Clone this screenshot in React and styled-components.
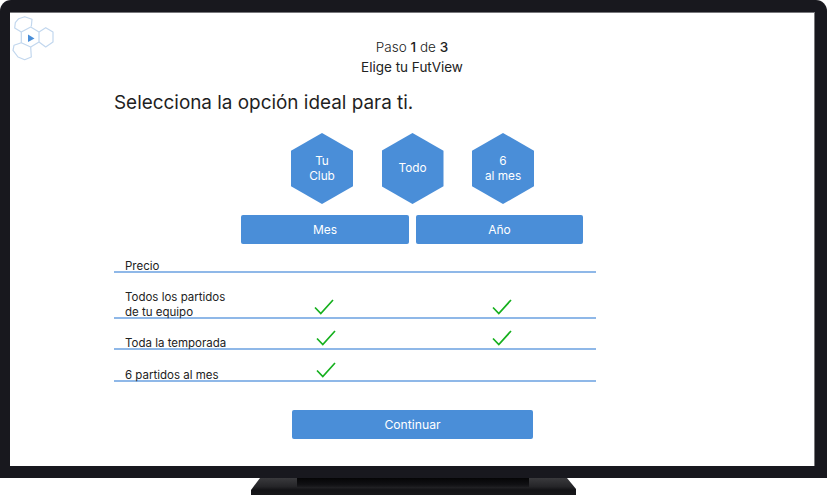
import React from 'react';
import styled, { createGlobalStyle } from 'styled-components';

const GlobalStyle = createGlobalStyle`
  html, body {
    margin: 0;
    padding: 0;
    background: #fff;
  }
  body {
    font-family: Inter, "Liberation Sans", sans-serif;
    overflow: hidden;
  }
`;

const Page = styled.div`
  width: 827px;
  height: 495px;
  display: flex;
  flex-direction: column;
  align-items: center;
`;

const Bezel = styled.div`
  width: 827px;
  height: 478px;
  box-sizing: border-box;
  padding: 12px 12px 12px 10px;
  background: #18181e;
  border-radius: 11px 11px 0 0;
`;

const Screen = styled.main`
  position: relative;
  height: 454px;
  box-sizing: border-box;
  padding: 24px 0 0 104px;
  background: #fff;
  border-top: 1px solid #77777b;
  border-right: 1px solid #77777b;
`;

const Logo = styled.svg`
  position: absolute;
  left: 0;
  top: 0;
`;

const Steps = styled.header`
  margin-left: -104px;
  text-align: center;
  font-size: 13.5px;
  line-height: 20px;
  color: #222;
`;

const StepCount = styled.div`
  font-weight: 300;
  b {
    font-weight: 500;
  }
`;

const Title = styled.h1`
  margin: 13px 0 0;
  font-size: 18.9px;
  line-height: 26px;
  font-weight: 400;
  color: #1f1f1f;
`;

const Options = styled.div`
  display: flex;
  gap: 28.5px;
  margin: 17px 0 0 177px;
`;

const Hexagon = styled.div`
  width: 62px;
  height: 71px;
  display: flex;
  align-items: center;
  justify-content: center;
  text-align: center;
  font-size: 11.8px;
  line-height: 15px;
  color: #fff;
  background: #4a8ed8;
  clip-path: polygon(50% 0, 100% 25%, 100% 75%, 50% 100%, 0 75%, 0 25%);
`;

const Plans = styled.div`
  display: flex;
  gap: 7px;
  margin: 11px 0 0 127px;
`;

const PlanButton = styled.button`
  width: ${props => props.$width}px;
  height: 29px;
  padding: 0;
  border: none;
  border-radius: 2px;
  font: inherit;
  font-size: 12px;
  color: #fff;
  background: #4a8ed8;
`;

const Table = styled.div`
  width: 482px;
  margin-top: 10px;
`;

const Row = styled.div`
  display: grid;
  grid-template-columns: 121px 178px 178px 5px;
  align-items: end;
  height: ${props => props.$height}px;
  box-sizing: border-box;
  border-bottom: 2px solid #8fb8e8;
`;

const Label = styled.div`
  margin-bottom: -2px;
  padding-left: 11px;
  white-space: nowrap;
  font-size: 11.5px;
  line-height: 14.5px;
  color: #222;
`;

const CheckCell = styled.div`
  display: flex;
  justify-content: center;
  padding: 0 0 2px ${props => props.$shift || 0}px;
`;

const Footer = styled.div`
  margin: 28px 0 0 178px;
`;

const ContinueButton = styled.button`
  width: 241px;
  height: 29px;
  padding: 0;
  border: none;
  border-radius: 2px;
  font: inherit;
  font-size: 12.2px;
  color: #fff;
  background: #4a8ed8;
`;

const Stand = styled.div`
  position: relative;
  width: 325px;
  height: 17px;
  background: linear-gradient(#3a3a3d, #252528 50%, #131316 70%, #17171a);
  clip-path: polygon(9px 0, 316px 0, 325px 11px, 325px 17px, 0 17px, 0 12px);
`;

const StandShadow = styled.div`
  position: absolute;
  left: 46px;
  top: 0;
  width: 232px;
  height: 9px;
  background: linear-gradient(#050506, #101013 70%, #1c1c1f);
`;

const Check = () => (
  <svg width="20" height="16" viewBox="0 0 20 16" fill="none">
    <path d="M1 8.5 L6.8 14.6 L19 1" stroke="#16b01e" strokeWidth="1.7" />
  </svg>
);

const FutLogo = () => (
  <Logo width="50" height="52" viewBox="0 0 50 52" fill="none">
    <g stroke="#c2d7ee" strokeWidth="1.2" strokeLinejoin="round">
      <path d="M11.3 19 L20.7 14 L29 19 V29 L20.7 34 L11.3 29.7 Z" />
      <path d="M29 19 L35.7 14.7 L43 19 V29 L35.7 34 L29 29" />
      <path d="M11.3 19 L4.7 15 L5.3 9.7 L8.7 5.7 L14.7 3.7 L22 6.3 L21.3 13.5" />
      <path d="M11.3 29.7 L4 32.3 L3 37.3 L8 44 L14.7 46.7 L21.3 44 L20.7 34" />
    </g>
    <path d="M18 21.5 L24.5 25.5 L18 29 Z" fill="#4a8ed8" />
  </Logo>
);

function App() {
  return (
    <Page>
      <GlobalStyle />
      <Bezel>
        <Screen>
          <FutLogo />
          <Steps>
            <StepCount>Paso <b>1</b> de <b>3</b></StepCount>
            <div>Elige tu FutView</div>
          </Steps>
          <Title>Selecciona la opción ideal para ti.</Title>
          <Options>
            <Hexagon>Tu<br />Club</Hexagon>
            <Hexagon>Todo</Hexagon>
            <Hexagon>6<br />al mes</Hexagon>
          </Options>
          <Plans>
            <PlanButton $width={168}>Mes</PlanButton>
            <PlanButton $width={167}>Año</PlanButton>
          </Plans>
          <Table>
            <Row $height={19}>
              <Label>Precio</Label>
            </Row>
            <Row $height={46}>
              <Label>Todos los partidos<br />de tu equipo</Label>
              <CheckCell><Check /></CheckCell>
              <CheckCell><Check /></CheckCell>
            </Row>
            <Row $height={31}>
              <Label>Toda la temporada</Label>
              <CheckCell $shift={4}><Check /></CheckCell>
              <CheckCell><Check /></CheckCell>
            </Row>
            <Row $height={32}>
              <Label>6 partidos al mes</Label>
              <CheckCell $shift={4}><Check /></CheckCell>
            </Row>
          </Table>
          <Footer>
            <ContinueButton>Continuar</ContinueButton>
          </Footer>
        </Screen>
      </Bezel>
      <Stand>
        <StandShadow />
      </Stand>
    </Page>
  );
}

export default App;
